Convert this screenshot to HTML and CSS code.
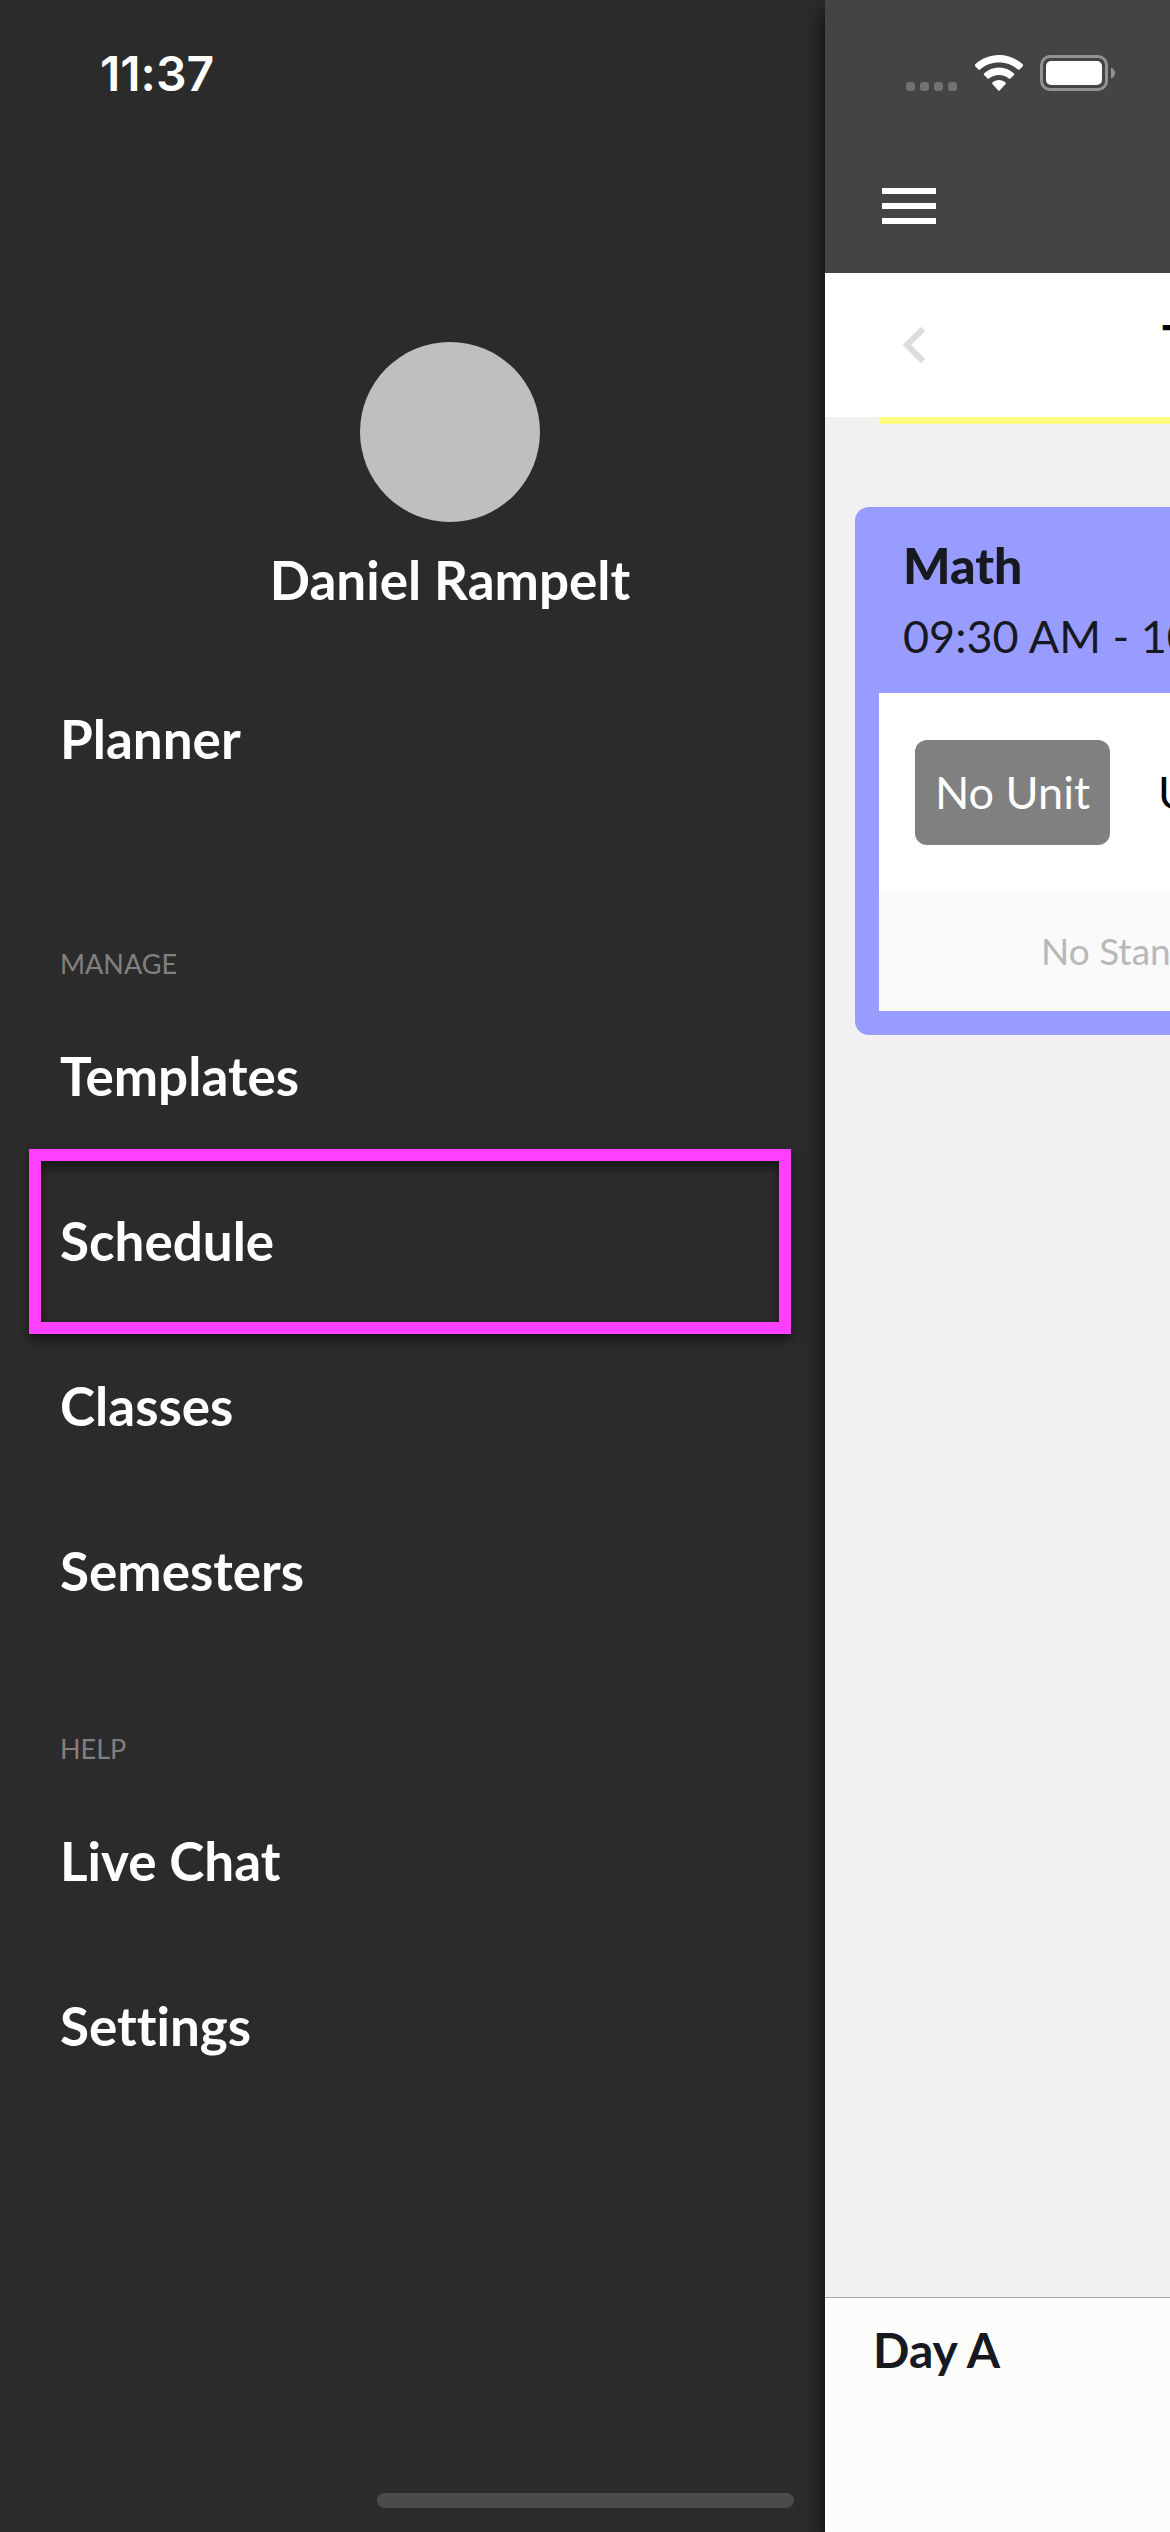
FILE: index.html
```html
<!DOCTYPE html>
<html lang="en">

<head>
    <meta charset="UTF-8">
    <meta name="viewport" content="width=device-width, initial-scale=1.0">
    <title>Planner</title>
    <link rel="stylesheet" href="styles.css">
</head>

<body>
    <div class="app">
        <aside class="sidebar">
            <div class="clock">11:37</div>
            <div class="profile">
                <div class="avatar"></div>
                <div class="profile-name">Daniel Rampelt</div>
            </div>
            <nav class="menu">
                <a href="#planner">Planner</a>
                <h2 class="manage">Manage</h2>
                <a href="#templates">Templates</a>
                <a href="#schedule" class="highlighted">Schedule</a>
                <a href="#classes">Classes</a>
                <a href="#semesters">Semesters</a>
                <h2>Help</h2>
                <a href="#chat">Live Chat</a>
                <a href="#settings">Settings</a>
            </nav>
            <div class="home-indicator"></div>
        </aside>

        <main class="main">
            <header class="topbar">
                <div class="status">
                    <svg width="52" height="9" viewBox="0 0 52 9" fill="#727272">
                        <rect x="0" width="9" height="9" rx="3" />
                        <rect x="14" width="9" height="9" rx="3" />
                        <rect x="28" width="9" height="9" rx="3" />
                        <rect x="42" width="9" height="9" rx="3" />
                    </svg>
                    <svg class="wifi" width="48" height="36" viewBox="0 0 48 36" fill="#fff">
                        <path d="M24 0C33 0 41.500 3.500 48 9.500Q48.600 10.200 48 10.900L44.500 14.600Q43.800 15.300 43 14.600C37.800 10.100 31.200 7.500 24 7.500S10.200 10.100 5 14.600Q4.200 15.300 3.500 14.600L0 10.900Q-.6 10.200 0 9.500C6.500 3.500 15 0 24 0Z" />
                        <path d="M24 12.500C29.700 12.500 35 14.800 39 18.500Q39.700 19.200 39 19.900L35.400 23.600Q34.700 24.300 33.900 23.600C31.200 21.300 27.800 20 24 20S16.800 21.300 14.100 23.600Q13.300 24.300 12.600 23.600L9 19.900Q8.300 19.200 9 18.500C13 14.800 18.300 12.500 24 12.500Z" />
                        <path d="M24 25C26.600 25 28.800 26 30.600 27.600Q31.200 28.300 30.600 29L24.700 35.400Q24 36 23.300 35.400L17.400 29Q16.800 28.300 17.400 27.600C19.200 26 21.400 25 24 25Z" />
                    </svg>
                    <svg width="76" height="36" viewBox="0 0 76 36">
                        <rect x="1.500" y="1.500" width="65" height="33" rx="8.500" fill="none" stroke="#929292" stroke-width="3" />
                        <rect x="6" y="6" width="56" height="24" rx="5" fill="#fff" />
                        <path d="M71 12.500Q75 14 75 18T71 23.500Z" fill="#929292" />
                    </svg>
                </div>
                <button class="icon-button" aria-label="Menu">
                    <svg width="54" height="36" viewBox="0 0 54 36" fill="#fff">
                        <rect width="54" height="6" />
                        <rect y="15" width="54" height="6" />
                        <rect y="30" width="54" height="6" />
                    </svg>
                </button>
            </header>

            <div class="datebar">
                <button class="icon-button" aria-label="Previous day">
                    <svg width="22" height="36" viewBox="0 0 22 36" fill="none" stroke="#dcdcdc" stroke-width="6">
                        <path d="M20 2L4 18L20 34" />
                    </svg>
                </button>
                <span class="date">T</span>
            </div>
            <div class="day-line"></div>

            <section class="lesson">
                <h3>Math</h3>
                <p class="time">09:30 AM - 10</p>
                <div class="unit-row">
                    <span class="unit">No Unit</span>
                    <span>U</span>
                </div>
                <div class="standards">No Stan</div>
            </section>

            <footer class="daybar">Day A</footer>
        </main>
    </div>
</body>

</html>
```
FILE: styles.css
```css
* {
    box-sizing: border-box;
}

body {
    margin: 0;
    font-family: Lato, "Open Sans", sans-serif;
    font-variant-ligatures: none;
    background-color: #2b2b2b;
}

h2,
h3,
p {
    margin: 0;
}

svg {
    display: block;
}

.app {
    display: grid;
    grid-template-columns: 55fr 23fr;
    min-height: 100vh;
}

/* Side menu */
.sidebar {
    display: flex;
    flex-direction: column;
    min-width: 0;
    background-color: #2b2b2b;
    color: white;
}

.clock {
    padding: 46px 0 0 100px;
    font-family: Inter, sans-serif;
    font-size: 48px;
    font-weight: 600;
    line-height: 56px;
}

.profile {
    display: flex;
    flex-direction: column;
    align-items: center;
    margin-top: 240px;
    padding-left: 75px;
}

.avatar {
    width: 180px;
    height: 180px;
    border-radius: 50%;
    background-color: #bfbfbf;
}

.profile-name {
    margin-top: 28px;
    font-size: 53px;
    font-weight: 700;
    line-height: 60px;
}

.menu {
    display: flex;
    flex-direction: column;
    margin-top: 46px;
}

.menu a {
    position: relative;
    padding-left: 60px;
    color: white;
    font-size: 53px;
    font-weight: 700;
    line-height: 165px;
    text-decoration: none;
}

.menu h2 {
    padding: 78px 0 11px 60px;
    color: #808080;
    font-size: 27px;
    font-weight: 400;
    line-height: 36px;
    text-transform: uppercase;
}

.menu .manage {
    margin-top: 47px;
}

.highlighted::after {
    content: "";
    position: absolute;
    inset: -9px 34px -11px 29px;
    border: 12px solid #ff40ff;
    filter: drop-shadow(0 6px 5px rgba(0, 0, 0, 0.5));
}

.home-indicator {
    align-self: flex-end;
    width: 417px;
    height: 15px;
    margin: auto 31px 24px 0;
    border-radius: 8px;
    background-color: #4b4b4b;
}

/* Planner page, pushed aside by the menu */
.main {
    display: flex;
    flex-direction: column;
    z-index: 1;
    min-width: 0;
    overflow: hidden;
    background-color: #f1f1f1;
    box-shadow: 0 12px 20px rgba(0, 0, 0, 0.8);
    white-space: nowrap;
}

.icon-button {
    padding: 0;
    border: none;
    background: none;
    cursor: pointer;
}

.topbar {
    height: 273px;
    padding: 55px 54px 0 57px;
    background-color: #444;
}

.status {
    display: flex;
    align-items: flex-end;
    justify-content: flex-end;
    margin-bottom: 97px;
}

.wifi {
    margin: 0 17px;
}

.datebar {
    display: flex;
    align-items: center;
    height: 144px;
    padding-left: 78px;
    background-color: white;
}

.date {
    margin-left: 237px;
    font-size: 48px;
    font-weight: 700;
    line-height: 60px;
    padding-bottom: 6px;
}

.day-line {
    height: 7px;
    margin-left: 54px;
    background-color: #fffa80;
}

.lesson {
    margin: 83px 0 0 30px;
    padding: 24px 0 24px 24px;
    border-radius: 14px 0 0 14px;
    background-color: #999cff;
    color: #16191f;
}

.lesson h3 {
    padding-left: 24px;
    font-size: 50px;
    font-weight: 900;
    line-height: 68px;
}

.time {
    padding: 0 0 20px 24px;
    font-size: 45px;
    line-height: 74px;
}

.unit-row {
    display: flex;
    align-items: center;
    gap: 48px;
    height: 198px;
    padding-left: 36px;
    background-color: white;
    color: black;
    font-size: 45px;
}

.unit {
    flex: none;
    width: 195px;
    border-radius: 12px;
    background-color: #808080;
    color: white;
    line-height: 105px;
    text-align: center;
}

.standards {
    padding-left: 162px;
    background-color: #fafafa;
    color: #b8b8b8;
    font-size: 37px;
    line-height: 120px;
}

.daybar {
    height: 235px;
    margin-top: auto;
    padding: 22px 0 0 48px;
    border-top: 1px solid #a6a6a6;
    background-color: #fcfdfb;
    color: #16191f;
    font-size: 48px;
    font-weight: 700;
    line-height: 60px;
}
```
